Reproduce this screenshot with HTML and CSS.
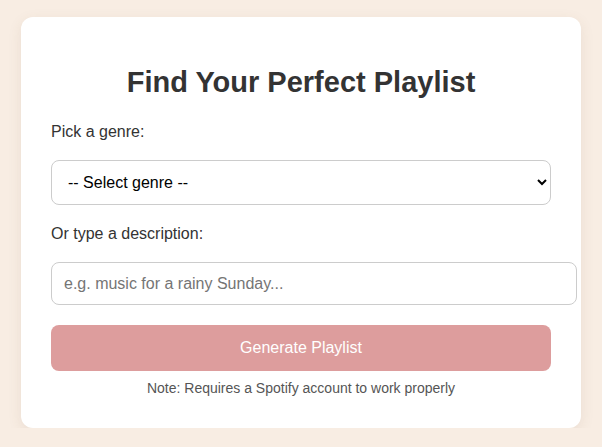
FILE: index.html
```html
<!DOCTYPE html>
<html lang="en">
<head>
<meta charset="utf-8">
<title>Find Your Perfect Playlist</title>
<link rel="stylesheet" href="styles.css">
</head>
<body>
  <main class="card">
    <h2 class="title">Find Your Perfect Playlist</h2>
    <label class="label" for="genre">Pick a genre:</label>
    <select id="genre" class="select">
      <option>-- Select genre --</option>
    </select>
    <label class="label" for="desc">Or type a description:</label>
    <input id="desc" class="input" type="text" placeholder="e.g. music for a rainy Sunday...">
    <button class="button" type="button">Generate Playlist</button>
    <p class="note">Note: Requires a Spotify account to work properly</p>
  </main>
</body>
</html>
```
FILE: styles.css
```css
html, body {
  margin: 0;
  padding: 0;
}
body {
  background: #f8ede3;
  font-family: "Liberation Sans", Arial, sans-serif;
  color: #333;
  padding-top: 17px;
}
.card {
  width: 500px;
  margin: 0 auto;
  background: #fff;
  border-radius: 12px;
  padding: 30px 30px 32px;
  box-shadow: 0 4px 14px rgba(120, 90, 60, 0.10);
  display: flex;
  flex-direction: column;
  align-items: flex-start;
}
.title {
  align-self: stretch;
  text-align: center;
  font-size: 29px;
  font-weight: bold;
  color: #333;
  margin: 19px 0 24px;
}
.label {
  font-size: 16px;
  color: #333;
  margin-bottom: 19px;
}
.select {
  width: 100%;
  height: 45px;
  padding: 0 12px;
  font-size: 16px;
  font-family: "Liberation Sans", Arial, sans-serif;
  border: 1px solid #ccc;
  border-radius: 8px;
  background: #fff;
  color: #000;
  margin-bottom: 20px;
}
.input {
  width: 100%;
  height: 41px;
  padding: 0 12px;
  font-size: 16px;
  font-family: "Liberation Sans", Arial, sans-serif;
  border: 1px solid #ccc;
  border-radius: 8px;
  margin: 0 0 20px;
  box-sizing: content-box;
}
.input::placeholder {
  color: #757575;
}
.button {
  width: 100%;
  height: 46px;
  padding: 0 14px;
  font-size: 16px;
  font-family: "Liberation Sans", Arial, sans-serif;
  background: #dd9d9d;
  color: #fff;
  border: none;
  border-radius: 8px;
}
.note {
  align-self: stretch;
  text-align: center;
  font-size: 14px;
  color: #555;
  margin: 9px 0 0;
}
```
